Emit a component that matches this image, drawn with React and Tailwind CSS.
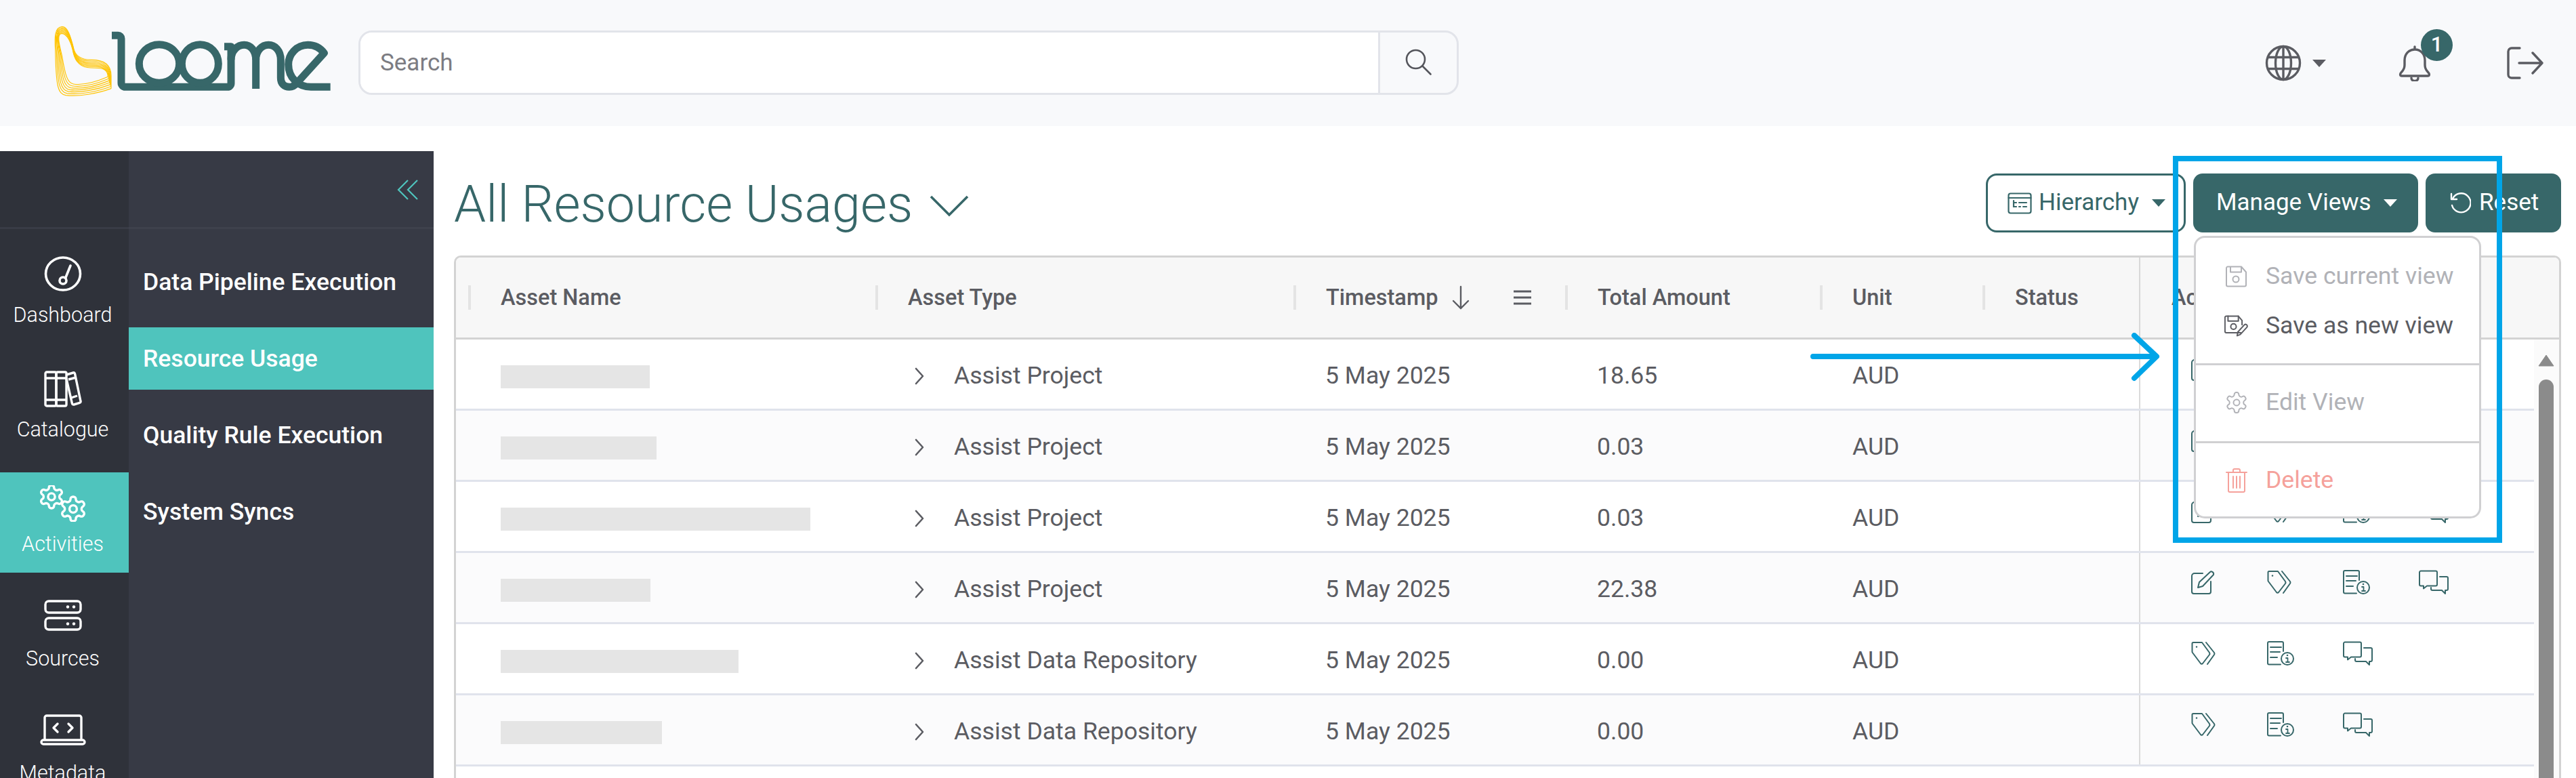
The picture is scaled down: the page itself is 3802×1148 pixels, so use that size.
import { useMemo } from "react";

const GEAR =
  "M12.22 2h-.44a2 2 0 0 0-2 2v.18a2 2 0 0 1-1 1.73l-.43.25a2 2 0 0 1-2 0l-.15-.08a2 2 0 0 0-2.73.73l-.22.38a2 2 0 0 0 .73 2.73l.15.1a2 2 0 0 1 1 1.72v.51a2 2 0 0 1-1 1.74l-.15.09a2 2 0 0 0-.73 2.73l.22.38a2 2 0 0 0 2.73.73l.15-.08a2 2 0 0 1 2 0l.43.25a2 2 0 0 1 1 1.73V20a2 2 0 0 0 2 2h.44a2 2 0 0 0 2-2v-.18a2 2 0 0 1 1-1.73l.43-.25a2 2 0 0 1 2 0l.15.08a2 2 0 0 0 2.73-.73l.22-.39a2 2 0 0 0-.73-2.73l-.15-.08a2 2 0 0 1-1-1.74v-.5a2 2 0 0 1 1-1.74l.15-.09a2 2 0 0 0 .73-2.73l-.22-.38a2 2 0 0 0-2.73-.73l-.15.08a2 2 0 0 1-2 0l-.43-.25a2 2 0 0 1-1-1.73V4a2 2 0 0 0-2-2z";

const ROWS = [
  { type: "Assist Project", amount: "18.65", skeleton: 220, edit: true },
  { type: "Assist Project", amount: "0.03", skeleton: 230, edit: true },
  { type: "Assist Project", amount: "0.03", skeleton: 457, edit: true },
  { type: "Assist Project", amount: "22.38", skeleton: 221, edit: true },
  { type: "Assist Data Repository", amount: "0.00", skeleton: 351, edit: false },
  { type: "Assist Data Repository", amount: "0.00", skeleton: 238, edit: false },
];

function LogoSwirl() {
  const lerp = (a, b, t) => (a + (b - a) * t).toFixed(1);
  const paths = useMemo(() => {
    const out = [];
    for (let i = 0; i < 7; i++) {
      const t = i / 6;
      const p = (x1, y1, x2, y2) => `${lerp(x1, x2, t)} ${lerp(y1, y2, t)}`;
      out.push(
        `M${p(358, 280, 372, 332)}` +
          `C${p(300, 305, 310, 355)} ${p(245, 318, 230, 368)} ${p(205, 312, 172, 362)}` +
          `C${p(178, 308, 136, 356)} ${p(168, 270, 128, 322)} ${p(155, 190, 125, 160)}` +
          `C${p(146, 150, 122, 110)} ${p(128, 92, 120, 60)} ${p(152, 88, 155, 58)}` +
          `C${p(178, 88, 180, 58)} ${p(196, 130, 192, 100)} ${p(205, 175, 205, 150)}` +
          `C${p(214, 215, 212, 190)} ${p(240, 240, 240, 205)} ${p(280, 240, 285, 205)}` +
          `C${p(325, 240, 340, 205)} ${p(358, 240, 372, 225)} ${p(358, 280, 372, 275)}` +
          `L${p(358, 280, 372, 332)}`
      );
    }
    return out;
  }, []);
  return (
    <g fill="none" stroke="#ffc400" strokeWidth="3.5">
      {paths.map((d) => (
        <path key={d} d={d} />
      ))}
    </g>
  );
}

function Logo() {
  return (
    <svg viewBox="0 0 1440 420" className="mb-[6px] h-[140px] w-[480px] shrink-0">
      <LogoSwirl />
      <g fill="none" stroke="#376769" strokeWidth="33" strokeLinejoin="round" strokeLinecap="butt">
        <path d="M375 97h28a14 14 0 0 1 14 14v196a18 18 0 0 0 18 18h452a16 16 0 0 0 16-16V146h-30" />
        <ellipse cx="585" cy="222" rx="89" ry="85" />
        <ellipse cx="766" cy="222" rx="81" ry="85" />
        <path d="M903 205c0-42 30-66 58-66s52 24 52 66v128" />
        <path d="M1013 205c0-42 28-66 56-66s54 24 54 66v80c0 26 16 40 38 40 14 0 26-8 36-20l118-130c-18-24-44-36-72-36-50 0-86 42-86 86 0 60 44 100 100 100h86" />
      </g>
    </svg>
  );
}

function Caret({ className }) {
  return (
    <svg viewBox="0 0 20 11" className={`h-[11px] w-[20px] shrink-0 ${className}`}>
      <path d="M0 0h20L10 11z" fill="currentColor" />
    </svg>
  );
}

function GlobeIcon() {
  return (
    <svg viewBox="0 0 54 54" className="h-[54px] w-[54px]" fill="none" stroke="currentColor" strokeWidth="3.4">
      <circle cx="27" cy="27" r="24.5" />
      <ellipse cx="27" cy="27" rx="11.5" ry="24.5" />
      <path d="M27 2.5v49M4.5 18.5h45M4.5 35.5h45" />
    </svg>
  );
}

function BellIcon() {
  return (
    <svg viewBox="0 0 48 54" className="h-[54px] w-[48px]" fill="none" stroke="currentColor" strokeWidth="3.4" strokeLinecap="round" strokeLinejoin="round">
      <path d="M24 3v4M24 7c-9 0-15 7-15 16v7c0 5-2 8-5 11-2 2-2 5 1 5h38c3 0 3-3 1-5-3-3-5-6-5-11v-7c0-9-6-16-15-16z" />
      <path d="M19 49c0 6 10 6 10 0" />
    </svg>
  );
}

function LogoutIcon() {
  return (
    <svg viewBox="0 0 54 48" className="h-[48px] w-[54px]" fill="none" stroke="currentColor" strokeWidth="3.4" strokeLinecap="round" strokeLinejoin="round">
      <path d="M19 2H7a5 5 0 0 0-5 5v34a5 5 0 0 0 5 5h12" />
      <path d="M18 24h34M38 9l14 15-14 15" />
    </svg>
  );
}

function SearchIcon() {
  return (
    <svg viewBox="0 0 40 40" className="h-[40px] w-[40px] text-[#55565c]" fill="none" stroke="currentColor" strokeWidth="2.6" strokeLinecap="round">
      <circle cx="15.5" cy="15.5" r="13.5" />
      <path d="M25.5 25.5l12 12" />
    </svg>
  );
}

function GaugeIcon() {
  return (
    <svg viewBox="0 0 56 52" className="h-[52px] w-[56px]" fill="none" stroke="currentColor" strokeWidth="3.6" strokeLinecap="round">
      <ellipse cx="28" cy="26" rx="25.5" ry="24" />
      <circle cx="28" cy="36" r="5" />
      <path d="M31.5 32.5L39 14" />
    </svg>
  );
}

function BooksIcon() {
  return (
    <svg viewBox="0 0 56 54" className="h-[54px] w-[56px]" fill="none" stroke="currentColor" strokeWidth="3.4" strokeLinejoin="round">
      <rect x="2" y="2" width="16" height="50" rx="2" />
      <rect x="18" y="2" width="15" height="50" rx="2" />
      <path d="M2 11h31M2 43h31" />
      <path d="M33 6l10-3a2 2 0 0 1 2.5 1.3L54 45a2 2 0 0 1-1.4 2.4L44 50a2 2 0 0 1-2.5-1.4L33 12" />
      <path d="M36 13l11-3M49 37l-9 3" />
    </svg>
  );
}

function GearsIcon() {
  return (
    <svg viewBox="0 0 68 54" className="h-[54px] w-[68px]" fill="none" stroke="currentColor" strokeLinejoin="round">
      <g transform="translate(-3.4 -3.4) scale(1.7)" strokeWidth="2">
        <path d={GEAR} />
        <circle cx="12" cy="12" r="3" />
      </g>
      <g transform="translate(27.4 13.4) scale(1.8)" strokeWidth="1.9">
        <path d={GEAR} />
        <circle cx="12" cy="12" r="3" />
      </g>
    </svg>
  );
}

function ServerIcon() {
  return (
    <svg viewBox="0 0 56 46" className="h-[46px] w-[56px]" fill="none" stroke="currentColor" strokeWidth="3.4">
      <rect x="2" y="2" width="52" height="17" rx="5" />
      <rect x="2" y="27" width="52" height="17" rx="5" />
      <g fill="currentColor" stroke="none">
        <circle cx="35" cy="10.5" r="2.2" />
        <circle cx="44" cy="10.5" r="2.2" />
        <circle cx="35" cy="35.5" r="2.2" />
        <circle cx="44" cy="35.5" r="2.2" />
      </g>
    </svg>
  );
}

function LaptopIcon() {
  return (
    <svg viewBox="0 0 68 46" className="h-[46px] w-[68px]" fill="none" stroke="currentColor" strokeWidth="3.4" strokeLinecap="round" strokeLinejoin="round">
      <path d="M7 37V5a3 3 0 0 1 3-3h48a3 3 0 0 1 3 3v32" />
      <rect x="2" y="38" width="64" height="6" rx="3" />
      <path d="M26 14l-6 6 6 6M42 14l6 6-6 6" />
    </svg>
  );
}

function HierarchyIcon() {
  return (
    <svg viewBox="0 0 36 32" className="h-[32px] w-[36px]" fill="none" stroke="currentColor" strokeWidth="2.2" strokeLinecap="round">
      <rect x="1.5" y="1.5" width="33" height="29" rx="3" />
      <path d="M1.5 8h33M9 12v9h4M9 15h4M17 15h11M17 21h2M23 21h5" />
    </svg>
  );
}

function ResetIcon() {
  return (
    <svg viewBox="0 0 32 32" className="h-[32px] w-[32px]" fill="none" stroke="currentColor" strokeWidth="2.4" strokeLinecap="round" strokeLinejoin="round">
      <path d="M5 9a14 14 0 1 1-1 10" />
      <path d="M3 2v8h8" />
    </svg>
  );
}

function SaveIcon() {
  return (
    <svg viewBox="0 0 32 32" className="h-[32px] w-[32px]" fill="none" stroke="currentColor" strokeWidth="2" strokeLinejoin="round">
      <path d="M3 1.5h20l7 8v19a2 2 0 0 1-2 2H3a2 2 0 0 1-2-2v-25a2 2 0 0 1 2-2z" />
      <path d="M7 1.5v8h16v-8" />
      <circle cx="15" cy="20" r="4.5" />
    </svg>
  );
}

function SaveAsIcon() {
  return (
    <svg viewBox="0 0 40 34" className="h-[34px] w-[40px]" fill="none" stroke="currentColor" strokeWidth="2.2" strokeLinejoin="round" strokeLinecap="round">
      <path d="M27 28H3a2 2 0 0 1-2-2V3a2 2 0 0 1 2-2h20l6 7v7" />
      <path d="M6 1v8h17V1" />
      <circle cx="15" cy="18" r="4.5" />
      <path d="M21 33l1-6 11-12c2-2 6 1 4 4L26 31z" />
    </svg>
  );
}

function TrashIcon() {
  return (
    <svg viewBox="0 0 32 36" className="h-[36px] w-[32px]" fill="none" stroke="currentColor" strokeWidth="2" strokeLinecap="round" strokeLinejoin="round">
      <path d="M1 6h30M11 6V3a2 2 0 0 1 2-2h6a2 2 0 0 1 2 2v3" />
      <path d="M4 6v27a2 2 0 0 0 2 2h20a2 2 0 0 0 2-2V6" />
      <path d="M11 12v17M16 12v17M21 12v17" />
    </svg>
  );
}

function GearOutlineIcon() {
  return (
    <svg viewBox="0 0 24 24" className="h-[36px] w-[36px]" fill="none" stroke="currentColor" strokeWidth="1.3" strokeLinejoin="round">
      <path d={GEAR} />
      <circle cx="12" cy="12" r="3" />
    </svg>
  );
}

function EditIcon() {
  return (
    <svg viewBox="0 0 36 36" className="h-[36px] w-[36px]" fill="none" stroke="currentColor" strokeWidth="2" strokeLinejoin="round" strokeLinecap="round">
      <path d="M17 5H5a4 4 0 0 0-4 4v23a3 3 0 0 0 3 3h22a3 3 0 0 0 3-3V17" />
      <path d="M10 26l2-8L28 3c2-2 6 1 5 4L17 24z" />
    </svg>
  );
}

function TagsIcon() {
  return (
    <svg viewBox="0 0 36 36" className="h-[36px] w-[36px]" fill="none" stroke="currentColor" strokeWidth="2" strokeLinejoin="round" strokeLinecap="round">
      <path d="M3 2h13l11 15a3 3 0 0 1 0 3L17 33a2 2 0 0 1-3 0L2 17a3 3 0 0 1-.5-2V3.5A1.5 1.5 0 0 1 3 2z" />
      <path d="M22 2l12 15a3 3 0 0 1 0 3L24 34" />
      <circle cx="8" cy="8.5" r="1.2" fill="currentColor" stroke="none" />
    </svg>
  );
}

function DocInfoIcon() {
  return (
    <svg viewBox="0 0 40 36" className="h-[36px] w-[40px]" fill="none" stroke="currentColor" strokeWidth="2" strokeLinecap="round" strokeLinejoin="round">
      <path d="M20 34.5H3a2 2 0 0 1-2-2V3a2 2 0 0 1 2-2h19a2 2 0 0 1 2 2v12" />
      <path d="M5 9h16M5 16h14M5 24h10" />
      <circle cx="30" cy="26" r="9" />
      <path d="M28 25h2.5v6M28 31h5" strokeWidth="1.8" />
      <circle cx="30" cy="21" r="1.3" fill="currentColor" stroke="none" />
    </svg>
  );
}

function ChatIcon() {
  return (
    <svg viewBox="0 0 44 36" className="h-[36px] w-[44px]" fill="none" stroke="currentColor" strokeWidth="2" strokeLinejoin="round" strokeLinecap="round">
      <path d="M3 1.5h22a2 2 0 0 1 2 2v18a2 2 0 0 1-2 2H12l-5 4v-4H3a2 2 0 0 1-2-2v-18a2 2 0 0 1 2-2z" />
      <path d="M31 10h10a2 2 0 0 1 2 2v16a2 2 0 0 1-2 2h-2v5l-5-5H20a2 2 0 0 1-2-2v-2" />
    </svg>
  );
}

function RailItem({ icon, label, active }) {
  return (
    <div className={`flex h-[148px] shrink-0 flex-col items-center pr-[4px] pt-[19px] text-[30.5px] font-light leading-[40px] text-white ${active ? "bg-[#4fc4bd]" : ""}`}>
      <div className="flex h-[54px] items-start justify-center">{icon}</div>
      <div className="mt-[13px] pr-[1px]">{label}</div>
    </div>
  );
}

function SubItem({ label, active }) {
  return (
    <div className={`flex h-[92px] items-center pl-[21px] pt-[2px] text-[35.5px] font-medium text-white ${active ? "bg-[#4fc4bd]" : ""}`}>{label}</div>
  );
}

function Sidebar() {
  return (
    <aside className="flex h-full w-[640px] shrink-0">
      <div className="flex w-[190px] shrink-0 flex-col overflow-hidden bg-[#2f323a]">
        <div className="h-[115px] shrink-0 border-b-[3px] border-[#393c46]" />
        <div className="flex flex-col gap-[21px] pt-[21px]">
          <RailItem icon={<GaugeIcon />} label="Dashboard" />
          <RailItem icon={<BooksIcon />} label="Catalogue" />
          <RailItem icon={<GearsIcon />} label="Activities" active />
          <RailItem icon={<ServerIcon />} label="Sources" />
          <RailItem icon={<LaptopIcon />} label="Metadata" />
        </div>
      </div>
      <div className="flex flex-1 flex-col bg-[#373a45]">
        <div className="flex h-[115px] shrink-0 items-start justify-end border-b-[3px] border-[#3e414c] pr-[22px] pt-[42px] text-[#4fc4bd]">
          <svg viewBox="0 0 32 30" className="h-[30px] w-[32px]" fill="none" stroke="currentColor" strokeWidth="2.2">
            <path d="M16 1L2 15l14 14M30 1L16 15l14 14" />
          </svg>
        </div>
        <div className="flex flex-col gap-[21px] pt-[32px]">
          <SubItem label="Data Pipeline Execution" />
          <SubItem label="Resource Usage" active />
          <SubItem label="Quality Rule Execution" />
          <SubItem label="System Syncs" />
        </div>
      </div>
    </aside>
  );
}

function HeadCell({ width, children }) {
  return (
    <div className={`flex shrink-0 items-center ${width}`}>
      <span className="h-[36px] w-[4px] shrink-0 bg-[#e4e4e4]" />
      <div className="ml-[44px] flex items-center">{children}</div>
    </div>
  );
}

function TableHead() {
  return (
    <div className="flex h-[121px] shrink-0 border-b-[3px] border-[#d3d3d3] bg-[#f7f7f7] pl-[18px] text-[32.5px] font-medium text-[#5b5c62]">
      <HeadCell width="w-[601px]">Asset Name</HeadCell>
      <HeadCell width="w-[617px]">Asset Type</HeadCell>
      <HeadCell width="w-[401px]">
        Timestamp
        <svg viewBox="0 0 28 36" className="ml-[20px] h-[36px] w-[28px]" fill="none" stroke="currentColor" strokeWidth="2.4" strokeLinecap="round">
          <path d="M14 2v32M3 23l11 11 11-11" />
        </svg>
        <svg viewBox="0 0 26 22" className="ml-[64px] h-[22px] w-[26px]" fill="none" stroke="currentColor" strokeWidth="3">
          <path d="M0 2h26M0 11h26M0 20h26" />
        </svg>
      </HeadCell>
      <HeadCell width="w-[376px]">Total Amount</HeadCell>
      <HeadCell width="w-[240px]">Unit</HeadCell>
      <HeadCell width="w-[231px]">Status</HeadCell>
      <div className="flex flex-1 items-center border-l-2 border-[#d8d8d8] pl-[46px]">Actions</div>
    </div>
  );
}

function Row({ row, shaded }) {
  return (
    <div className={`flex h-[105px] shrink-0 border-b-[3px] border-[#e0e3ec] pl-[18px] text-[35.6px] text-[#5b5c62] ${shaded ? "bg-[#fbfbfc]" : "bg-white"}`}>
      <div className="flex w-[601px] shrink-0 items-center pl-[48px] pt-[8px]">
        <div className="h-[34px] bg-[#e5e5e5]" style={{ width: row.skeleton }} />
      </div>
      <div className="flex w-[617px] shrink-0 items-center pl-[58px] pt-[6px]">
        <svg viewBox="0 0 14 26" className="h-[26px] w-[14px]" fill="none" stroke="currentColor" strokeWidth="2.6" strokeLinecap="round" strokeLinejoin="round">
          <path d="M2 2l10 11L2 24" />
        </svg>
        <span className="ml-[44px]">{row.type}</span>
      </div>
      <div className="flex w-[401px] shrink-0 items-center pl-[47px] pt-[6px]">5 May 2025</div>
      <div className="flex w-[376px] shrink-0 items-center pl-[47px] pt-[6px]">{row.amount}</div>
      <div className="flex w-[240px] shrink-0 items-center pl-[48px] pt-[6px]">AUD</div>
      <div className="w-[231px] shrink-0" />
      <div className="flex flex-1 items-start border-l-2 border-[#dadada] pl-[75px] pt-[25px] text-[#376769]">
        {row.edit && (
          <div className="w-[112px] shrink-0">
            <EditIcon />
          </div>
        )}
        <div className="w-[112px] shrink-0">
          <TagsIcon />
        </div>
        <div className="w-[112px] shrink-0">
          <DocInfoIcon />
        </div>
        <div className="w-[112px] shrink-0">
          <ChatIcon />
        </div>
      </div>
    </div>
  );
}

function MenuItem({ icon, label, tone }) {
  return (
    <div className={`flex h-[73px] items-center pl-[42px] ${tone}`}>
      <div className="flex w-[36px] shrink-0 justify-center">{icon}</div>
      <span className="ml-[25px]">{label}</span>
    </div>
  );
}

function ManageMenu() {
  return (
    <div className="absolute left-[1px] top-full z-10 mt-[5px] h-[417px] w-[424px] rounded-[16px] border-[3px] border-[#d0d0d2] bg-white text-[35.6px]">
      <div className="border-b-[3px] border-[#d0d0d2] pb-[19px] pt-[20px]">
        <MenuItem icon={<SaveIcon />} label="Save current view" tone="text-[#b1b2b7]" />
        <MenuItem icon={<SaveAsIcon />} label="Save as new view" tone="text-[#5b5c62]" />
      </div>
      <div className="border-b-[3px] border-[#d0d0d2] pb-[21px] pt-[18px]">
        <MenuItem icon={<GearOutlineIcon />} label="Edit View" tone="text-[#b1b2b7]" />
      </div>
      <div className="pt-[18px]">
        <MenuItem icon={<TrashIcon />} label="Delete" tone="text-[#f5a19b]" />
      </div>
    </div>
  );
}

function Toolbar() {
  return (
    <div className="flex h-[87px] shrink-0 items-center justify-between">
      <div className="flex items-center pt-[4px] text-[#376769]">
        <h1 className="text-[75.5px] font-light leading-none">All Resource Usages</h1>
        <svg viewBox="0 0 58 32" className="ml-[25px] mt-[4px] h-[32px] w-[58px]" fill="none" stroke="currentColor" strokeWidth="3.6">
          <path d="M2 2l27 27L56 2" />
        </svg>
      </div>
      <div className="flex items-center gap-[11px] text-[35px]">
        <button type="button" className="flex h-[87px] w-[295px] items-center rounded-[16px] border-[3px] border-[#376769] pl-[29px] text-[#376769]">
          <HierarchyIcon />
          <span className="ml-[10px]">Hierarchy</span>
          <Caret className="ml-[19px]" />
        </button>
        <div className="relative">
          <button type="button" className="flex h-[87px] w-[332px] items-center rounded-[14px] bg-[#376769] pl-[34px] text-white">
            Manage Views
            <Caret className="ml-[18px]" />
          </button>
          <ManageMenu />
        </div>
        <button type="button" className="flex h-[87px] w-[200px] items-center rounded-[14px] bg-[#376769] pl-[35px] text-white">
          <ResetIcon />
          <span className="ml-[12px]">Reset</span>
        </button>
      </div>
    </div>
  );
}

function Scrollbar() {
  return (
    <div className="flex w-[37px] shrink-0 flex-col items-center bg-[#fbfbfb] pr-[1px] pt-[22px]">
      <svg viewBox="0 0 24 18" className="h-[18px] w-[24px]">
        <path d="M12 1L23 17H1z" fill="#8b8b8b" stroke="#8b8b8b" strokeLinejoin="round" />
      </svg>
      <div className="mt-[19px] w-[22px] flex-1 rounded-t-full bg-[#8b8b8b]" />
    </div>
  );
}

export default function App() {
  return (
    <div className="relative flex h-[1148px] w-[3802px] flex-col overflow-hidden bg-white font-['Roboto',sans-serif]">
      <header className="flex h-[186px] shrink-0 items-center bg-[#f8f9fb] pl-[40px] pr-[48px] text-[#5b5c62]">
        <Logo />
        <div className="mb-[2px] ml-[9px] flex h-[95px] w-[1624px] overflow-hidden rounded-[20px] border-[3px] border-[#e2e4ea]">
          <input
            readOnly
            placeholder="Search"
            className="min-w-0 flex-1 bg-white pl-[29px] pt-[3px] text-[35px] outline-none placeholder:text-[#7c7c82]"
          />
          <div className="flex w-[116px] shrink-0 items-center justify-center border-l-[3px] border-[#e2e4ea]">
            <SearchIcon />
          </div>
        </div>
        <div className="ml-auto flex items-center">
          <GlobeIcon />
          <Caret className="ml-[16px]" />
          <div className="relative ml-[107px]">
            <BellIcon />
            <span className="absolute left-[33px] top-[-23px] flex h-[47px] w-[47px] items-center justify-center rounded-full bg-[#376769] text-[31px] font-medium text-white">1</span>
          </div>
          <div className="ml-[112px]">
            <LogoutIcon />
          </div>
        </div>
      </header>

      <div className="mt-[37px] flex min-h-0 flex-1">
        <Sidebar />
        <main className="flex min-w-0 flex-1 flex-col pl-[30px] pr-[22px] pt-[33px]">
          <Toolbar />
          <div className="mt-[34px] flex min-h-0 flex-1 flex-col overflow-hidden rounded-t-[10px] border-x-[3px] border-t-[3px] border-[#d3d3d3]">
            <TableHead />
            <div className="flex min-h-0 flex-1">
              <div className="min-w-0 flex-1">
                {ROWS.map((row, i) => (
                  <Row key={i} row={row} shaded={i % 2 === 1} />
                ))}
              </div>
              <Scrollbar />
            </div>
          </div>
        </main>
      </div>

      {/* annotation drawn over the screenshot */}
      <div className="absolute left-[3207px] top-[230px] z-20 h-[571px] w-[486px] border-[8px] border-[#00a5e8]" />
      <svg viewBox="0 0 520 72" className="absolute left-[2670px] top-[491px] z-20 h-[72px] w-[520px]" fill="none" stroke="#00a5e8" strokeWidth="8" strokeLinecap="round" strokeLinejoin="round">
        <path d="M6 35h506M480 4l33 31-33 32" />
      </svg>
    </div>
  );
}
